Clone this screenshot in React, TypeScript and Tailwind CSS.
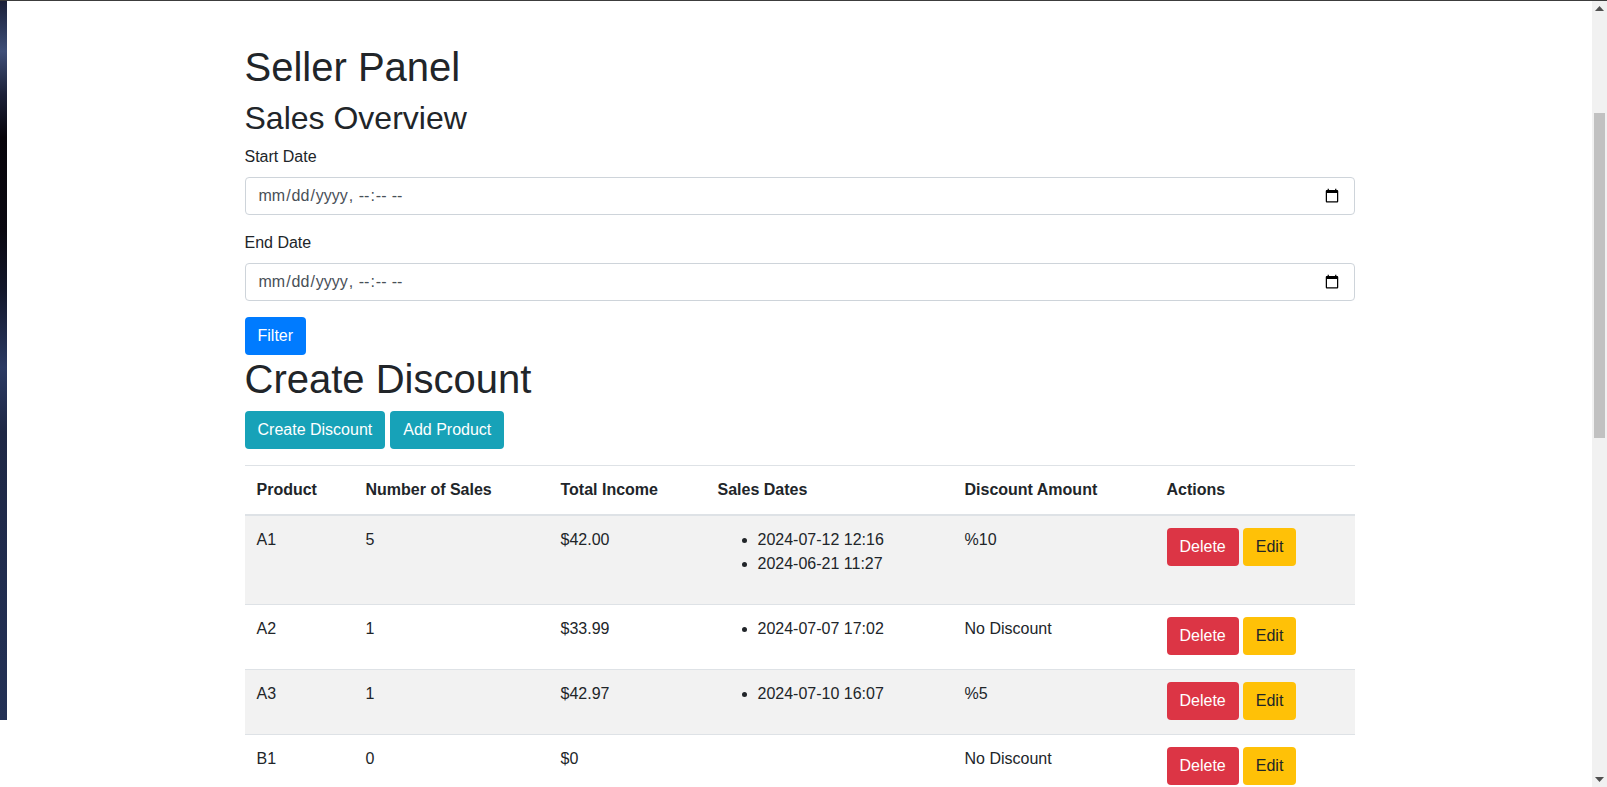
import React from 'react';

interface SaleRow {
  product: string;
  count: number;
  income: string;
  dates: string[];
  discount: string;
}

const rows: SaleRow[] = [
  { product: 'A1', count: 5, income: '$42.00', dates: ['2024-07-12 12:16', '2024-06-21 11:27'], discount: '%10' },
  { product: 'A2', count: 1, income: '$33.99', dates: ['2024-07-07 17:02'], discount: 'No Discount' },
  { product: 'A3', count: 1, income: '$42.97', dates: ['2024-07-10 16:07'], discount: '%5' },
  { product: 'B1', count: 0, income: '$0', dates: [], discount: 'No Discount' },
];

const btn = 'inline-block px-3 py-1.5 text-base leading-6 rounded border border-transparent';

const DateField = ({ label }: { label: string }) => (
  <div className="mb-4">
    <label className="block mb-2 leading-6">{label}</label>
    <input
      type="datetime-local"
      className="block w-full h-[38px] px-3 py-1.5 text-base leading-6 text-[#495057] bg-white border border-[#ced4da] rounded font-['Liberation_Sans',Arial,sans-serif]"
    />
  </div>
);

const Scrollbar = () => (
  <div className="flex flex-col w-[15px] shrink-0 bg-[#f1f1f1]">
    {/* up arrow */}
    <div className="h-[15px] flex items-center justify-center">
      <svg width="9" height="5" viewBox="0 0 9 5">
        <path d="M0 5 L4.5 0 L9 5 Z" fill="#505050" />
      </svg>
    </div>
    <div className="h-[97px]" />
    {/* thumb */}
    <div className="h-[325px] mx-[2px] bg-[#c1c1c1]" />
    <div className="flex-1" />
    <div className="h-[15px] flex items-center justify-center">
      <svg width="9" height="5" viewBox="0 0 9 5">
        <path d="M0 0 L9 0 L4.5 5 Z" fill="#505050" />
      </svg>
    </div>
  </div>
);

export default function App() {
  return (
    <div className="flex flex-col h-[787px] w-full overflow-hidden bg-white text-[#212529] font-['Liberation_Sans',Arial,sans-serif]">
      <div className="h-px bg-[#3c3c3c] shrink-0" />
      <div className="flex flex-1 min-h-0">
        {/* desktop strip showing at the left edge */}
        <div className="flex flex-col w-[7px] shrink-0">
          <div className="h-[719px] bg-[linear-gradient(180deg,#1b2038_0%,#2e3a5c_4%,#3f4f78_7%,#1c2138_13%,#07040a_19%,#0a0810_32%,#121629_40%,#2b3a63_51%,#1e2744_60%,#202c4e_80%,#233155_100%)]" />
          <div className="flex-1 bg-white" />
        </div>

        <main className="flex-1 min-w-0">
          <div className="mx-auto w-[1140px] px-[15px] pt-[42px]">
            <h1 className="text-[40px] leading-[48px] font-medium mb-2">Seller Panel</h1>
            <h2 className="text-[32px] leading-[38.4px] font-medium mb-2">Sales Overview</h2>

            <DateField label="Start Date" />
            <DateField label="End Date" />

            <button className={`${btn} bg-[#007bff] text-white`}>Filter</button>

            <h1 className="text-[40px] leading-[48px] font-medium mb-2">Create Discount</h1>
            <div className="flex gap-[5px]">
              <button className={`${btn} bg-[#17a2b8] text-white`}>Create Discount</button>
              <button className={`${btn} bg-[#17a2b8] text-white`}>Add Product</button>
            </div>

            <table className="w-full mt-4 table-fixed border-collapse">
              <colgroup>
                <col className="w-[109px]" />
                <col className="w-[195px]" />
                <col className="w-[157px]" />
                <col className="w-[247px]" />
                <col className="w-[202px]" />
                <col className="w-[200px]" />
              </colgroup>
              <thead>
                <tr>
                  {['Product', 'Number of Sales', 'Total Income', 'Sales Dates', 'Discount Amount', 'Actions'].map((h) => (
                    <th
                      key={h}
                      className="p-3 text-left align-bottom font-bold leading-6 border-t border-b-2 border-[#dee2e6]"
                    >
                      {h}
                    </th>
                  ))}
                </tr>
              </thead>
              <tbody>
                {rows.map((r, i) => (
                  <tr key={r.product} className={i % 2 === 0 ? 'bg-[#f2f2f2]' : 'bg-white'}>
                    <td className="p-3 align-top leading-6 border-t border-[#dee2e6]">{r.product}</td>
                    <td className="p-3 align-top leading-6 border-t border-[#dee2e6]">{r.count}</td>
                    <td className="p-3 align-top leading-6 border-t border-[#dee2e6]">{r.income}</td>
                    <td className="p-3 align-top leading-6 border-t border-[#dee2e6]">
                      <ul className="list-disc pl-10 mb-4">
                        {r.dates.map((d) => (
                          <li key={d}>{d}</li>
                        ))}
                      </ul>
                    </td>
                    <td className="p-3 align-top leading-6 border-t border-[#dee2e6]">{r.discount}</td>
                    <td className="p-3 align-top leading-6 border-t border-[#dee2e6]">
                      <div className="flex gap-[4px]">
                        <button className={`${btn} bg-[#dc3545] text-white`}>Delete</button>
                        <button className={`${btn} bg-[#ffc107] text-[#212529]`}>Edit</button>
                      </div>
                    </td>
                  </tr>
                ))}
              </tbody>
            </table>
          </div>
        </main>

        <Scrollbar />
      </div>
    </div>
  );
}
